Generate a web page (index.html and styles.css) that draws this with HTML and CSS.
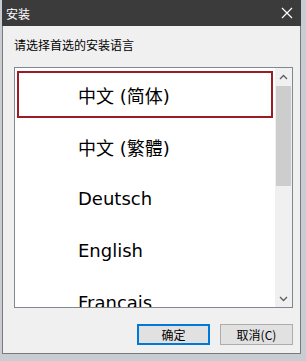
FILE: index.html
```html
<!DOCTYPE html>
<html lang="zh-CN">
<head>
  <meta charset="UTF-8">
  <title>安装</title>
  <link rel="stylesheet" href="styles.css">
</head>
<body>
  <div class="window">
    <div class="title-bar">
      <span class="title-text">安装</span>
      <svg class="close-icon" width="12" height="12" viewBox="0 0 12 12">
        <path d="M1 1 L11 11 M11 1 L1 11" stroke="#ffffff" stroke-width="1.2" fill="none"/>
      </svg>
    </div>
    <div class="content">
      <div class="prompt">请选择首选的安装语言</div>
      <div class="listbox">
        <div class="items">
          <div class="item selected">中文 (简体)</div>
          <div class="item">中文 (繁體)</div>
          <div class="item">Deutsch</div>
          <div class="item">English</div>
          <div class="item">Francais</div>
        </div>
        <div class="scrollbar">
          <div class="arrow">
            <svg width="9" height="6" viewBox="0 0 9 6"><path d="M1 5 L4.5 1.5 L8 5" stroke="#606060" stroke-width="1.4" fill="none"/></svg>
          </div>
          <div class="track">
            <div class="thumb"></div>
          </div>
          <div class="arrow">
            <svg width="9" height="6" viewBox="0 0 9 6"><path d="M1 1 L4.5 4.5 L8 1" stroke="#606060" stroke-width="1.4" fill="none"/></svg>
          </div>
        </div>
      </div>
      <div class="buttons">
        <button class="btn default">确定</button>
        <button class="btn">取消(C)</button>
      </div>
    </div>
  </div>
</body>
</html>
```

FILE: styles.css
```css
body {
  margin: 0;
  background-color: #c9ccd3;
  font-family: "Noto Sans CJK SC", sans-serif;
  height: 361px;
  overflow: hidden;
}
.window {
  box-sizing: border-box;
  margin-left: 2px;
  width: 299px;
  height: 354px;
  background-color: #f0f0f0;
  border: 1px solid #7a7a7a;
  border-top: none;
  display: flex;
  flex-direction: column;
}
.title-bar {
  height: 26px;
  margin: 0 -1px;
  background-color: #3b3b3b;
  color: #ffffff;
  display: flex;
  align-items: center;
  justify-content: space-between;
  padding: 0 6px 0 4px;
  font-size: 12px;
}
.close-icon {
  margin-right: 2px;
}
.content {
  flex: 1;
  display: flex;
  flex-direction: column;
  padding: 0 7px 0 11px;
}
.prompt {
  margin-top: 11px;
  font-size: 12px;
  line-height: 16px;
  color: #000000;
}
.listbox {
  box-sizing: border-box;
  margin-top: 14px;
  height: 241px;
  background-color: #ffffff;
  border: 1px solid #828790;
  display: flex;
  overflow: hidden;
}
.items {
  flex: 1;
  display: flex;
  flex-direction: column;
  gap: 5px;
  padding: 3px 2px 0 2px;
  overflow: hidden;
}
.item {
  box-sizing: border-box;
  flex: 0 0 47px;
  display: flex;
  align-items: center;
  padding-left: 59px;
  font-family: "DejaVu Sans", "Noto Sans CJK SC", sans-serif;
  font-size: 18px;
  color: #000000;
  border: 2px solid transparent;
}
.item.selected {
  border-color: #9b1c27;
}
.scrollbar {
  width: 17px;
  display: flex;
  flex-direction: column;
  background-color: #f0f0f0;
}
.arrow {
  height: 17px;
  display: flex;
  align-items: center;
  justify-content: center;
}
.track {
  flex: 1;
  padding: 1px 1px 0 1px;
}
.thumb {
  height: 100px;
  background-color: #cdcdcd;
}
.buttons {
  display: flex;
  justify-content: flex-end;
  gap: 10px;
  margin-top: 16px;
}
.btn {
  box-sizing: border-box;
  width: 73px;
  height: 21px;
  padding: 0;
  background-color: #e1e1e1;
  border: 1px solid #adadad;
  font-family: "Noto Sans CJK SC", sans-serif;
  font-size: 12px;
  line-height: 1;
  color: #000000;
}
.btn.default {
  border: 2px solid #0078d7;
}
```
